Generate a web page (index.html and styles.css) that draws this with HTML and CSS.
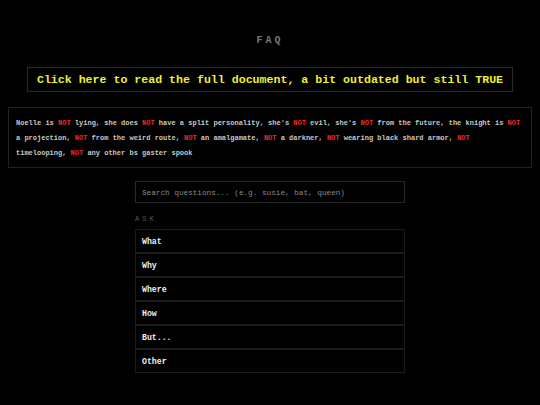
FILE: index.html
```html
<!DOCTYPE html>
<html lang="en">
<head>
<meta charset="utf-8">
<title>FAQ</title>
<link rel="stylesheet" href="styles.css">
</head>
<body>
<main class="page">
  <h1 class="title">FAQ</h1>
  <div class="banner-wrap">
    <a class="banner" href="#">Click here to read the full document, a bit outdated but still TRUE</a>
  </div>
  <p class="notice">Noelle is <b>NOT</b> lying, she does <b>NOT</b> have a split personality, she's <b>NOT</b> evil, she's <b>NOT</b> from the future, the knight is <b>NOT</b> a projection, <b>NOT</b> from the weird route, <b>NOT</b> an amalgamate, <b>NOT</b> a darkner, <b>NOT</b> wearing black shard armor, <b>NOT</b> timelooping, <b>NOT</b> any other bs gaster spook</p>
  <section class="column">
    <input class="search" type="text" placeholder="Search questions... (e.g. susie, bat, queen)">
    <div class="label">ASK</div>
    <ul class="list">
      <li class="item">What</li>
      <li class="item">Why</li>
      <li class="item">Where</li>
      <li class="item">How</li>
      <li class="item">But...</li>
      <li class="item">Other</li>
    </ul>
  </section>
</main>
</body>
</html>
```
FILE: styles.css
```css
html, body {
  margin: 0;
  background: #000;
  font-family: "Liberation Mono", "DejaVu Sans Mono", monospace;
  -webkit-font-smoothing: antialiased;
}
.page {
  padding: 0 8px;
}
.title {
  margin: 34px 0 0;
  text-align: center;
  font-size: 10px;
  line-height: 14px;
  letter-spacing: 3px;
  font-weight: bold;
  color: #777;
}
.banner-wrap {
  margin-top: 19px;
  text-align: center;
}
.banner {
  display: inline-block;
  border: 1px solid #2a2a2a;
  padding: 5px 9px;
  font-size: 11.6px;
  line-height: 13px;
  font-weight: bold;
  color: #f0f02a;
  text-decoration: none;
}
.notice {
  margin: 15px 0 0;
  border: 1px solid #222;
  padding: 8px 7px 6px;
  font-size: 7px;
  line-height: 15px;
  font-weight: bold;
  color: #c8c8c8;
}
.notice b {
  color: #ee2a2a;
  font-weight: bold;
}
.column {
  width: 270px;
  margin: 13px auto 0;
}
.search {
  display: block;
  box-sizing: border-box;
  width: 100%;
  height: 22px;
  margin: 0;
  border: 1px solid #2a2a2a;
  padding: 1px 6px 0;
  background: #000;
  font-family: inherit;
  font-size: 7.7px;
  color: #ddd;
  outline: none;
}
.search::placeholder {
  color: #8a8a8a;
}
.label {
  margin-top: 12px;
  font-size: 7px;
  line-height: 9px;
  letter-spacing: 3px;
  color: #555;
}
.list {
  list-style: none;
  margin: 5px 0 0;
  padding: 0;
}
.item {
  border: 1px solid #1c1c1c;
  padding: 1px 6px 0;
  height: 21px;
  line-height: 21px;
  font-size: 8.2px;
  font-weight: bold;
  color: #eee;
}
```
